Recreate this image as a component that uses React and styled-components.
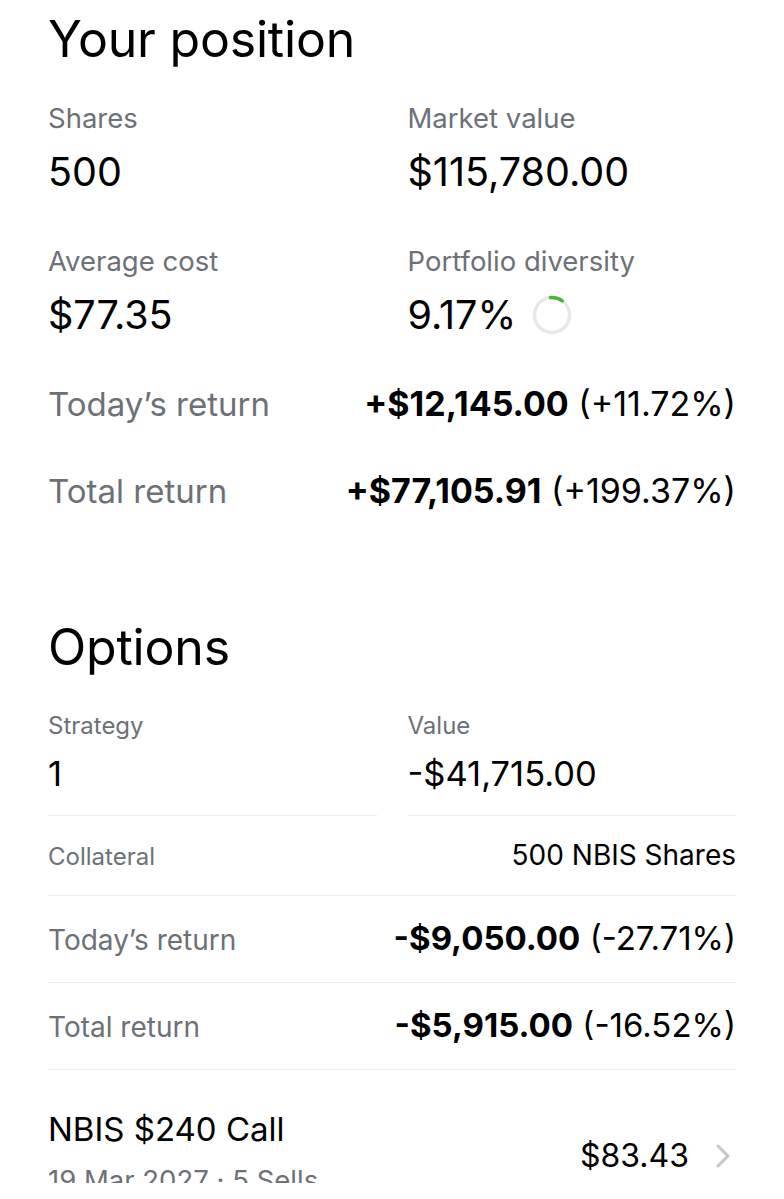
import React from "react";
import styled, { createGlobalStyle } from "styled-components";

const GlobalStyle = createGlobalStyle`
  body {
    margin: 0;
    background: #ffffff;
    font-family: Inter, "Noto Sans", "Liberation Sans", sans-serif;
    color: #000000;
  }
`;

const Page = styled.div`
  height: 1183px;
  overflow: hidden;
  padding: 10px 48px 0;
  box-sizing: border-box;
`;

const SectionTitle = styled.h2`
  margin: ${(p) => p.$top || 0}px 0 0;
  font-size: 50px;
  line-height: 58px;
  font-weight: 400;
  letter-spacing: -0.2px;
`;

const StatGrid = styled.div`
  display: grid;
  grid-template-columns: 1fr 1fr;
  column-gap: 31px;
  row-gap: 51px;
  margin-top: 34px;
`;

const Stat = styled.div`
  display: flex;
  flex-direction: column;
  gap: 16px;
`;

const Label = styled.div`
  font-size: ${(p) => p.$size || 27.5}px;
  line-height: ${(p) => p.$lh || 32}px;
  color: #6c7177;
`;

const Value = styled.div`
  display: flex;
  align-items: center;
  gap: 16px;
  font-size: ${(p) => p.$size || 39.5}px;
  line-height: ${(p) => p.$lh || 44}px;
`;

const ReturnRow = styled.div`
  display: flex;
  justify-content: space-between;
  align-items: baseline;
  margin-top: 47px;
  font-size: 33px;
  line-height: 40px;
`;

const ReturnLabel = styled.span`
  color: #6c7177;
`;

const ReturnValue = styled.span`
  font-size: 34px;
  b {
    font-weight: 700;
  }
`;

const OptionGrid = styled.div`
  display: grid;
  grid-template-columns: 1fr 1fr;
  column-gap: 31px;
  margin-top: 35px;
`;

const OptionCell = styled.div`
  display: flex;
  flex-direction: column;
  gap: 13px;
  padding-bottom: 21px;
  border-bottom: 1px solid #ececee;
`;

const DetailRow = styled.div`
  display: flex;
  justify-content: space-between;
  align-items: baseline;
  padding: ${(p) => (p.$compact ? "24px 0 23px" : "25px 0 25px")};
  border-bottom: 1px solid #ececee;
  font-size: ${(p) => (p.$compact ? 24 : 28)}px;
  line-height: ${(p) => (p.$compact ? 30 : 34)}px;
`;

const DetailValue = styled.span`
  font-size: ${(p) => p.$size || 28}px;
  b {
    font-weight: 700;
  }
`;

const PositionRow = styled.div`
  display: flex;
  justify-content: space-between;
  align-items: center;
  padding-top: 41px;
`;

const PositionInfo = styled.div`
  display: flex;
  flex-direction: column;
  gap: 16px;
`;

const PositionName = styled.div`
  font-size: 33px;
  line-height: 36px;
`;

const PositionMeta = styled.div`
  font-size: 27.5px;
  line-height: 34px;
  color: #6c7177;
`;

const PositionPrice = styled.div`
  display: flex;
  align-items: center;
  gap: 27px;
  margin: 4px 6px 0 0;
  font-size: 32px;
  line-height: 40px;
`;

const DiversityRing = () => (
  <svg width="40" height="40" viewBox="0 0 40 40">
    <circle cx="20" cy="20" r="17.5" fill="none" stroke="#e8e8ec" strokeWidth="3.5" />
    <path
      d="M18.5 2.56 A17.5 17.5 0 0 1 30.3 5.9"
      fill="none"
      stroke="#4cb63c"
      strokeWidth="3.5"
      strokeLinecap="round"
    />
  </svg>
);

const Chevron = () => (
  <svg width="14" height="24" viewBox="0 0 14 24">
    <path d="M2 2 L12 12 L2 22" fill="none" stroke="#c5c5ca" strokeWidth="3" strokeLinecap="round" strokeLinejoin="round" />
  </svg>
);

export default function App() {
  return (
    <>
      <GlobalStyle />
      <Page>
        <SectionTitle>Your position</SectionTitle>
        <StatGrid>
          <Stat>
            <Label>Shares</Label>
            <Value>500</Value>
          </Stat>
          <Stat>
            <Label>Market value</Label>
            <Value>$115,780.00</Value>
          </Stat>
          <Stat>
            <Label>Average cost</Label>
            <Value>$77.35</Value>
          </Stat>
          <Stat>
            <Label>Portfolio diversity</Label>
            <Value>
              9.17%
              <DiversityRing />
            </Value>
          </Stat>
        </StatGrid>
        <ReturnRow>
          <ReturnLabel>Today’s return</ReturnLabel>
          <ReturnValue>
            <b>+$12,145.00</b> (+11.72%)
          </ReturnValue>
        </ReturnRow>
        <ReturnRow>
          <ReturnLabel>Total return</ReturnLabel>
          <ReturnValue>
            <b>+$77,105.91</b> (+199.37%)
          </ReturnValue>
        </ReturnRow>

        <SectionTitle $top={107}>Options</SectionTitle>
        <OptionGrid>
          <OptionCell>
            <Label $size={24} $lh={30}>Strategy</Label>
            <Value $size={34.5} $lh={40}>1</Value>
          </OptionCell>
          <OptionCell>
            <Label $size={24} $lh={30}>Value</Label>
            <Value $size={34.5} $lh={40}>-$41,715.00</Value>
          </OptionCell>
        </OptionGrid>
        <DetailRow $compact>
          <ReturnLabel>Collateral</ReturnLabel>
          <DetailValue>500 NBIS Shares</DetailValue>
        </DetailRow>
        <DetailRow>
          <ReturnLabel>Today’s return</ReturnLabel>
          <DetailValue $size={33}>
            <b>-$9,050.00</b> (-27.71%)
          </DetailValue>
        </DetailRow>
        <DetailRow>
          <ReturnLabel>Total return</ReturnLabel>
          <DetailValue $size={33}>
            <b>-$5,915.00</b> (-16.52%)
          </DetailValue>
        </DetailRow>
        <PositionRow>
          <PositionInfo>
            <PositionName>NBIS $240 Call</PositionName>
            <PositionMeta>19 Mar 2027 · 5 Sells</PositionMeta>
          </PositionInfo>
          <PositionPrice>
            $83.43
            <Chevron />
          </PositionPrice>
        </PositionRow>
      </Page>
    </>
  );
}
